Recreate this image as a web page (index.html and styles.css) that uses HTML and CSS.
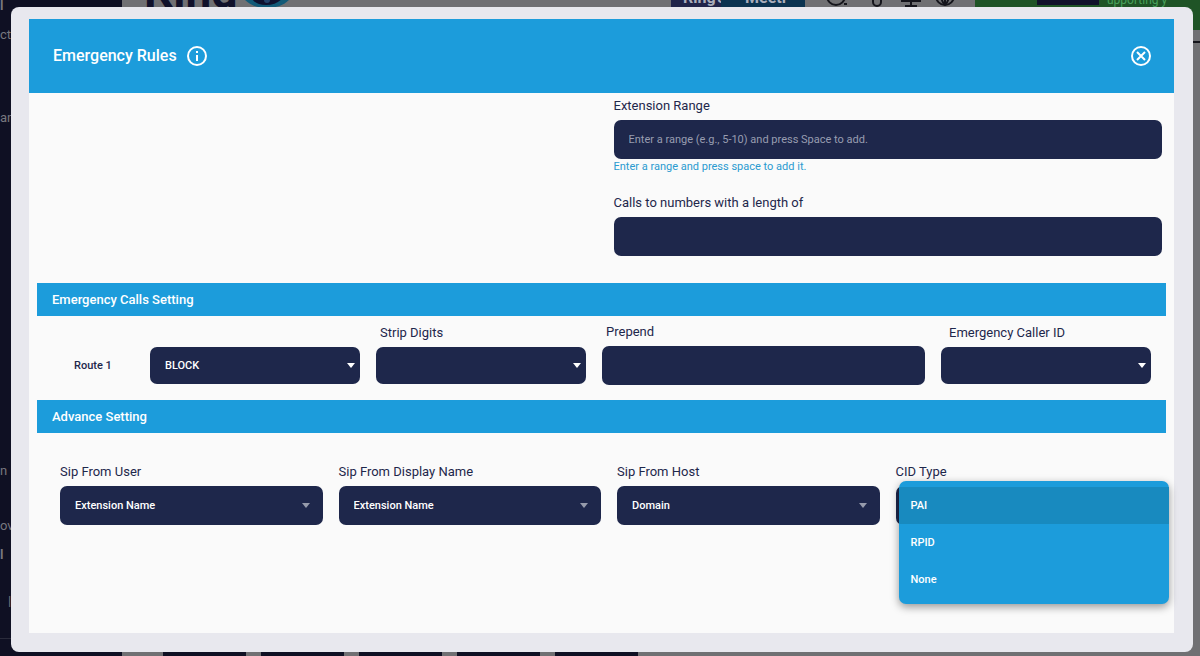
FILE: index.html
```html
<!DOCTYPE html>
<html lang="en">
<head>
<meta charset="utf-8">
<meta name="viewport" content="width=device-width, initial-scale=1">
<title>Emergency Rules</title>
<link rel="stylesheet" href="styles.css">
</head>
<body>
<div class="app" aria-hidden="true">
  <div class="sidebar">
    <span class="side-item strong">l</span>
    <span class="side-item gap-s">cte</span>
    <span class="side-item gap-l">an</span>
    <span class="side-item gap-xl">n</span>
    <span class="side-item gap-m">ov</span>
    <span class="side-item gap-s strong">l</span>
    <span class="side-item side-end">|</span>
    <span class="side-rule"></span>
  </div>
  <div class="main">
    <div class="topbar">
      <span class="brand">King</span>
      <svg class="brand-mark" viewBox="0 0 52 32"><path d="M0 0h52v18C48 27 38 32 26 32S4 27 0 18z" fill="#125a78"/><path d="M9 0h34v19c-2 6-9 10-18 10S11 25 9 19z" fill="#0f1230"/><circle cx="26" cy="24" r="3" fill="#23426b"/></svg>
      <span class="partner"><span class="partner-a">Ring's</span><span class="partner-b">Meeti</span></span>
      <svg class="tools" viewBox="0 0 130 32" fill="none" stroke="#15151c" stroke-width="2"><circle cx="11" cy="20" r="9"/><path d="M19 28h3M56 14v12a4 4 0 0 1-8 0v-3M76 25h20M86 18v12M80 30h12"/><circle cx="120" cy="20" r="9"/><path d="M111 22h18M120 11v18M120 29c-5-5-5-13 0-18M120 29c5-5 5-13 0-18"/></svg>
      <span class="promo"><span class="promo-chip"></span><span class="promo-text">upporting y</span></span>
    </div>
    <div class="tiles"><span></span><span></span><span></span><span></span><span></span></div>
  </div>
</div>

<div class="overlay">
  <section class="dialog" role="dialog" aria-modal="true" aria-labelledby="dialog-title">
    <header class="dialog-head">
      <h1 id="dialog-title">Emergency Rules</h1>
      <button class="icon-btn" type="button" aria-label="Information">
        <svg viewBox="0 0 24 24" width="24" height="24"><circle cx="12" cy="12" r="9" fill="none" stroke="currentColor" stroke-width="2"/><path d="M11 11h2v6h-2zM11 7h2v2h-2z" fill="currentColor"/></svg>
      </button>
      <button class="icon-btn close" type="button" aria-label="Close">
        <svg viewBox="0 0 24 24" width="24" height="24" fill="none" stroke="currentColor" stroke-width="2"><circle cx="12" cy="12" r="9"/><path d="M8 8l8 8M16 8l-8 8"/></svg>
      </button>
    </header>
    <form class="dialog-body">
      <div class="split">
        <div class="field first-field">
          <label for="range">Extension Range</label>
          <input class="control" id="range" type="text" placeholder="Enter a range (e.g., 5-10) and press Space to add." aria-describedby="range-hint">
          <p class="hint" id="range-hint">Enter a range and press space to add it.</p>
        </div>
        <div class="field">
          <label for="length">Calls to numbers with a length of</label>
          <input class="control" id="length" type="text">
        </div>
      </div>

      <h2 class="band">Emergency Calls Setting</h2>
      <div class="routes">
        <label class="route-name" for="route1">Route 1</label>
        <div class="route-field">
          <div class="picker compact">
            <select class="control" id="route1"><option>BLOCK</option></select>
            <svg class="caret" viewBox="0 0 8 5"><path d="M0 0h8L4 5z"/></svg>
          </div>
        </div>
        <div class="route-field">
          <label for="strip">Strip Digits</label>
          <div class="picker compact">
            <select class="control" id="strip"><option></option></select>
            <svg class="caret" viewBox="0 0 8 5"><path d="M0 0h8L4 5z"/></svg>
          </div>
        </div>
        <div class="route-field">
          <label for="prepend">Prepend</label>
          <input class="control" id="prepend" type="text">
        </div>
        <div class="route-field wide-inset">
          <label for="caller">Emergency Caller ID</label>
          <div class="picker compact">
            <select class="control" id="caller"><option></option></select>
            <svg class="caret" viewBox="0 0 8 5"><path d="M0 0h8L4 5z"/></svg>
          </div>
        </div>
      </div>

      <h2 class="band">Advance Setting</h2>
      <div class="sip">
        <div class="field">
          <label for="sip-user">Sip From User</label>
          <div class="picker">
            <select class="control" id="sip-user"><option>Extension Name</option></select>
            <svg class="caret" viewBox="0 0 8 5"><path d="M0 0h8L4 5z"/></svg>
          </div>
        </div>
        <div class="field">
          <label for="sip-name">Sip From Display Name</label>
          <div class="picker">
            <select class="control" id="sip-name"><option>Extension Name</option></select>
            <svg class="caret" viewBox="0 0 8 5"><path d="M0 0h8L4 5z"/></svg>
          </div>
        </div>
        <div class="field">
          <label for="sip-host">Sip From Host</label>
          <div class="picker">
            <select class="control" id="sip-host"><option>Domain</option></select>
            <svg class="caret" viewBox="0 0 8 5"><path d="M0 0h8L4 5z"/></svg>
          </div>
        </div>
        <div class="field">
          <label for="cid">CID Type</label>
          <div class="picker">
            <button class="control" id="cid" type="button" aria-haspopup="listbox" aria-expanded="true" aria-controls="cid-menu"></button>
            <ul class="menu" id="cid-menu" role="listbox" aria-label="CID Type">
              <li role="option" aria-selected="true">PAI</li>
              <li role="option" aria-selected="false">RPID</li>
              <li role="option" aria-selected="false">None</li>
            </ul>
          </div>
        </div>
      </div>
    </form>
  </section>
</div>
</body>
</html>
```
FILE: styles.css
```css
:root {
  --blue: #1c9cdb;
  --navy: #1e274b;
  --shade: #0f1023;
}

* { box-sizing: border-box; }

body {
  margin: 0;
  height: 100vh;
  overflow: hidden;
  background: #707073;
  color: var(--navy);
  font-family: Roboto, "Liberation Sans", sans-serif;
  font-size: 13px;
}

h1, h2, p, ul { margin: 0; padding: 0; }

/* Dimmed application behind the dialog */
.app { display: flex; height: 100vh; overflow: hidden; }

.sidebar {
  display: flex;
  flex-direction: column;
  flex: 0 0 122px;
  background: var(--shade);
  color: #77777f;
  overflow: hidden;
}
.side-item { flex: none; height: 20px; line-height: 20px; }
.side-item.strong { font-weight: 700; margin-top: -4px; }
.side-item.gap-s { margin-top: 9px; }
.side-item.gap-m { margin-top: 35px; }
.side-item.gap-l { margin-top: 63px; }
.side-item.gap-xl { margin-top: 333px; }
.side-end { margin-top: 26px; padding-left: 8px; }
.side-rule { margin-top: 27px; border-top: 1px solid #2a2b3b; }

.main {
  display: flex;
  flex: 1;
  flex-direction: column;
  justify-content: space-between;
  min-width: 0;
}
.topbar {
  display: flex;
  align-items: flex-start;
  height: 67px;
  margin-top: -24px;
  padding-left: 22px;
  border-bottom: 2px solid #15151c;
}
.brand { color: #10112a; font-size: 46px; font-weight: 700; line-height: 32px; }
.brand-mark { width: 52px; height: 32px; margin-left: 4px; }
.partner {
  display: flex;
  margin-left: auto;
  height: 31px;
  color: #a9adba;
  font-size: 16px;
  font-weight: 700;
  line-height: 44px;
}
.partner-a { width: 50px; padding-left: 12px; background: #20244a; }
.partner-b { width: 84px; padding-left: 24px; background: #0b3350; }
.tools { width: 130px; height: 32px; margin: 0 20px; }
.promo {
  display: flex;
  width: 225px;
  height: 54px;
  padding-left: 62px;
  background: #1f5426;
  color: #48a05a;
  font-size: 12px;
  line-height: 48px;
}
.promo-chip { width: 62px; height: 29px; margin-right: 8px; background: #10112a; }
.tiles { display: flex; gap: 15px; height: 10px; padding-left: 41px; }
.tiles span { width: 83px; background: var(--shade); }

/* Dialog */
.overlay {
  position: fixed;
  inset: 0;
  display: flex;
  padding: 7px 7px 4px 11px;
}
.dialog {
  display: flex;
  flex: 1;
  flex-direction: column;
  min-width: 0;
  padding: 12px 19px 19px 18px;
  border-radius: 8px;
  background: #e8e8ee;
}
.dialog-head {
  display: flex;
  align-items: center;
  gap: 8px;
  padding: 25px 21px 25px 24px;
  background: var(--blue);
  color: #fff;
}
.dialog-head h1 { font-size: 16px; font-weight: 500; line-height: 24px; }
.icon-btn {
  display: flex;
  padding: 0;
  border: 0;
  background: none;
  color: inherit;
  cursor: pointer;
}
.close { margin-left: auto; }

.dialog-body {
  flex: 1;
  padding: 3px 8px 0;
  background: #fafafa;
}
label { display: block; line-height: 20px; }
.field { display: flex; flex-direction: column; }
.field label { margin-bottom: 4px; }

.control {
  display: block;
  width: 100%;
  height: 39px;
  margin: 0;
  padding: 0 15px;
  border: 0;
  border-radius: 7px;
  background: var(--navy);
  color: #fff;
  font: 500 11px/18px Roboto, "Liberation Sans", sans-serif;
  appearance: none;
}
.control::placeholder { color: #989db0; font-weight: 400; opacity: 1; }
.hint { color: #2b9bd0; font-size: 11px; line-height: 16px; }

.picker { position: relative; }
.caret {
  position: absolute;
  top: 17px;
  right: 13px;
  width: 8px;
  height: 5px;
  fill: #969bab;
  pointer-events: none;
}
.compact { margin: 1px 0; }
.compact .control { height: 37px; }
.compact .caret { top: 16px; right: 5px; fill: #fff; }

.split { width: 50%; margin-left: auto; padding: 0 4px 27px 12px; }
.first-field { margin-bottom: 18px; }

.band {
  padding: 0 15px;
  background: var(--blue);
  color: #fff;
  font-size: 13px;
  font-weight: 500;
  line-height: 33px;
}

.routes {
  display: grid;
  grid-template-columns: 97px 210fr 210fr 323fr 210fr;
  gap: 16px;
  align-items: end;
  padding: 6px 15px 15px 0;
}
.route-name { padding-left: 37px; font-size: 11px; font-weight: 500; line-height: 39px; }
.route-field label { margin-bottom: 4px; padding-left: 4px; }
.wide-inset label { padding-left: 8px; }

.sip {
  display: grid;
  grid-template-columns: repeat(4, 1fr);
  gap: 16px;
  padding: 29px 8px 0 23px;
}

.menu {
  position: absolute;
  top: -5px;
  right: -11px;
  left: 3px;
  padding: 6px 0;
  border-radius: 7px;
  background: var(--blue);
  box-shadow: 0 3px 8px rgba(0, 0, 0, 0.4);
  color: #fff;
  font-size: 11px;
  font-weight: 500;
  list-style: none;
}
.menu li { padding: 0 12px; line-height: 37px; }
.menu li[aria-selected="true"] { background: #188abf; }
```
